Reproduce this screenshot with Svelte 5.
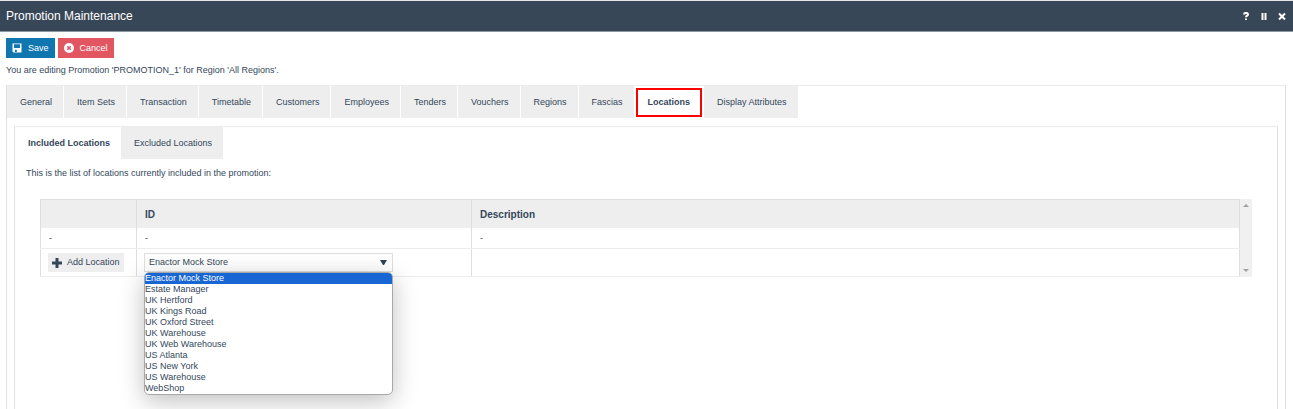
<script lang="ts">
    const tabs = [
        "General",
        "Item Sets",
        "Transaction",
        "Timetable",
        "Customers",
        "Employees",
        "Tenders",
        "Vouchers",
        "Regions",
        "Fascias",
        "Locations",
        "Display Attributes",
    ];
    const subTabs = ["Included Locations", "Excluded Locations"];
    const stores = [
        "Enactor Mock Store",
        "Estate Manager",
        "UK Hertford",
        "UK Kings Road",
        "UK Oxford Street",
        "UK Warehouse",
        "UK Web Warehouse",
        "US Atlanta",
        "US New York",
        "US Warehouse",
        "WebShop",
    ];

    let activeTab = $state("Locations");
    let activeSubTab = $state("Included Locations");
    let store = $state("Enactor Mock Store");
    let open = $state(true);

    function pick(name: string) {
        store = name;
        open = false;
    }

    function toggle(event: MouseEvent) {
        event.preventDefault();
        open = !open;
    }
</script>

<div class="page">
    <header>
        <h1>Promotion Maintenance</h1>
        <div class="window-buttons">
            <button aria-label="Help">
                <svg width="8" height="8" viewBox="0 0 8 8">
                    <path d="M2 2.5C2 .4 6 .4 6 2.4C6 3.8 4 3.6 4 5.3M4 6.4V8" />
                </svg>
            </button>
            <button aria-label="Pause">
                <svg width="8" height="8" viewBox="0 0 8 8"><path d="M2.5 1V8M5.5 1V8" /></svg>
            </button>
            <button aria-label="Close">
                <svg width="8" height="8" viewBox="0 0 8 8"><path d="M1 1.5L7 7.5M7 1.5L1 7.5" /></svg>
            </button>
        </div>
    </header>

    <main>
        <div class="actions">
            <button class="save">
                <svg width="10" height="10" viewBox="0 0 10 10">
                    <path
                        fill="#fff"
                        fill-rule="evenodd"
                        d="M.5 .5H9.5V9.5H1.5L.5 8.5ZM2 1.2V5H8V1.2ZM3 6.8V9H4.8V6.8Z" />
                </svg>
                Save
            </button>
            <button class="cancel">
                <svg width="10" height="10" viewBox="0 0 10 10">
                    <circle cx="5" cy="5" r="5" fill="#fff" />
                    <path d="M3.2 3.2L6.8 6.8M6.8 3.2L3.2 6.8" stroke="#e15661" stroke-width="1.6" />
                </svg>
                Cancel
            </button>
        </div>
        <p class="status">You are editing Promotion 'PROMOTION_1' for Region 'All Regions'.</p>

        <section class="panel">
            <nav class="tabs main-tabs">
                {#each tabs as tab}
                    <button class="tab" class:active={tab === activeTab} onclick={() => (activeTab = tab)}>
                        {tab}
                    </button>
                {/each}
            </nav>

            <section class="panel inner">
                <nav class="tabs">
                    {#each subTabs as tab}
                        <button
                            class="tab"
                            class:active={tab === activeSubTab}
                            onclick={() => (activeSubTab = tab)}>
                            {tab}
                        </button>
                    {/each}
                </nav>
                <p class="intro">This is the list of locations currently included in the promotion:</p>

                <div class="list">
                    <table>
                        <thead>
                            <tr>
                                <th class="action-col"></th>
                                <th class="id-col">ID</th>
                                <th>Description</th>
                            </tr>
                        </thead>
                        <tbody>
                            <tr class="empty">
                                <td>-</td>
                                <td>-</td>
                                <td>-</td>
                            </tr>
                            <tr class="edit">
                                <td>
                                    <button class="add">
                                        <svg width="10" height="10" viewBox="0 0 10 10">
                                            <path d="M5 0V10M0 5H10" stroke="#34475a" stroke-width="3" />
                                        </svg>
                                        Add Location
                                    </button>
                                </td>
                                <td>
                                    <div class="picker">
                                        <select aria-label="Location" bind:value={store} onmousedown={toggle}>
                                            {#each stores as name}
                                                <option>{name}</option>
                                            {/each}
                                        </select>
                                        <svg class="arrow" width="7" height="5" viewBox="0 0 7 5">
                                            <path d="M0 0H7L4 5H3Z" fill="#2f4356" />
                                        </svg>
                                        {#if open}
                                            <div class="options" role="listbox" aria-label="Locations">
                                                {#each stores as name}
                                                    <button
                                                        role="option"
                                                        aria-selected={name === store}
                                                        class:selected={name === store}
                                                        onclick={() => pick(name)}>
                                                        {name}
                                                    </button>
                                                {/each}
                                            </div>
                                        {/if}
                                    </div>
                                </td>
                                <td></td>
                            </tr>
                        </tbody>
                    </table>
                    <div class="scrollbar">
                        <svg width="6" height="3" viewBox="0 0 6 3"><path d="M0 3L3 0L6 3Z" fill="#a0a0a0" /></svg>
                        <svg width="6" height="3" viewBox="0 0 6 3"><path d="M0 0L3 3L6 0Z" fill="#a0a0a0" /></svg>
                    </div>
                </div>
            </section>
        </section>
    </main>
</div>

<style>
    :global(body) {
        background: #fff;
    }

    .page {
        display: flex;
        flex-direction: column;
        min-height: 100vh;

        color: #34475a;
        font-family: "Liberation Sans", Arial, sans-serif;
        font-size: 9px;
        line-height: 11px;
    }

    button,
    select {
        margin: 0;
        padding: 0;

        border: none;
        color: inherit;
        font: inherit;
        cursor: pointer;
    }

    header {
        display: flex;
        align-items: center;
        justify-content: space-between;

        height: 29px;
        padding: 0 7px 1px 6px;

        border-top: 1px solid #e4e6e8;
        border-bottom: 1px solid #8e98a2;
        background: #384757;
        color: #fff;
    }

    h1 {
        margin: 0;

        font-size: 12px;
        font-weight: normal;
        line-height: 14px;
    }

    .window-buttons {
        display: flex;
        gap: 10px;
    }

    .window-buttons button {
        display: flex;

        background: none;
    }

    .window-buttons path {
        fill: none;
        stroke: #fff;
        stroke-width: 2;
    }

    main {
        display: flex;
        flex: 1;
        flex-direction: column;

        padding: 6px 7px 0 6px;
    }

    .actions {
        display: flex;
        gap: 3px;
    }

    .actions button {
        display: flex;
        align-items: center;
        gap: 6px;

        height: 20px;
        padding: 0 6px;

        color: #fff;
    }

    .actions .save {
        background: #1076b0;
    }

    .actions .cancel {
        background: #e15661;
    }

    .status {
        margin: 7px 0 9px;
    }

    .panel {
        display: flex;
        flex: 1;
        flex-direction: column;

        border: 1px solid #dfdfdf;
        border-top-color: #ececec;
        border-bottom: none;
    }

    .panel.inner {
        margin: 8px 7px 0;
    }

    .tabs {
        display: flex;
    }

    .main-tabs {
        gap: 1px;
    }

    .tab {
        height: 32px;
        padding: 0 11px 0 13px;

        background: #eee;
    }

    .tab.active {
        background: #fff;
        font-weight: bold;
    }

    .main-tabs .active {
        height: 29px;
        margin: 2px 1px 1px;
        padding: 0 10px;

        border: 2px solid #f00;
    }

    .intro {
        margin: 9px 11px 20px;
    }

    .list {
        display: flex;

        margin: 0 25px;
    }

    table {
        flex: 1;

        border-collapse: collapse;
        table-layout: fixed;
    }

    th,
    td {
        padding: 0 8px;

        border: 1px solid #dedede;
        text-align: left;
    }

    th {
        height: 28px;

        border-bottom: none;
        background: #eee;
        font-size: 10px;
    }

    td {
        border-top-color: #ececec;
        border-bottom-color: #ececec;
    }

    .action-col {
        width: 79px;
    }

    .id-col {
        width: 318px;
    }

    .empty td {
        height: 20px;

        border-top: none;
    }

    .edit td {
        height: 27px;
        padding: 0 7px;
    }

    .add {
        display: flex;
        align-items: center;
        gap: 5px;

        height: 19px;
        padding: 0 4px;

        background: #eee;
    }

    .picker {
        position: relative;

        width: 249px;
    }

    select {
        display: block;
        box-sizing: border-box;

        width: 100%;
        height: 19px;
        padding: 0 4px;

        border: 1px solid #dedede;
        background: #fff;
        appearance: none;
    }

    .arrow {
        position: absolute;
        top: 7px;
        right: 6px;

        pointer-events: none;
    }

    .options {
        position: absolute;
        top: 100%;
        left: 0;
        z-index: 1;

        display: flex;
        flex-direction: column;
        box-sizing: border-box;

        width: 100%;
        overflow: hidden;

        border: 1px solid #a8a8a8;
        border-radius: 5px;
        background: #fff;
        box-shadow: 0 6px 24px rgba(0, 0, 0, 0.25);
    }

    .options button {
        height: 11px;

        background: none;
        text-align: left;
    }

    .options .selected {
        background: #1766d3;
        color: #fff;
    }

    .scrollbar {
        display: flex;
        align-items: center;
        flex-direction: column;
        justify-content: space-between;

        width: 12px;
        padding: 5px 0;
        box-sizing: border-box;

        background: #f0f0f0;
    }
</style>
